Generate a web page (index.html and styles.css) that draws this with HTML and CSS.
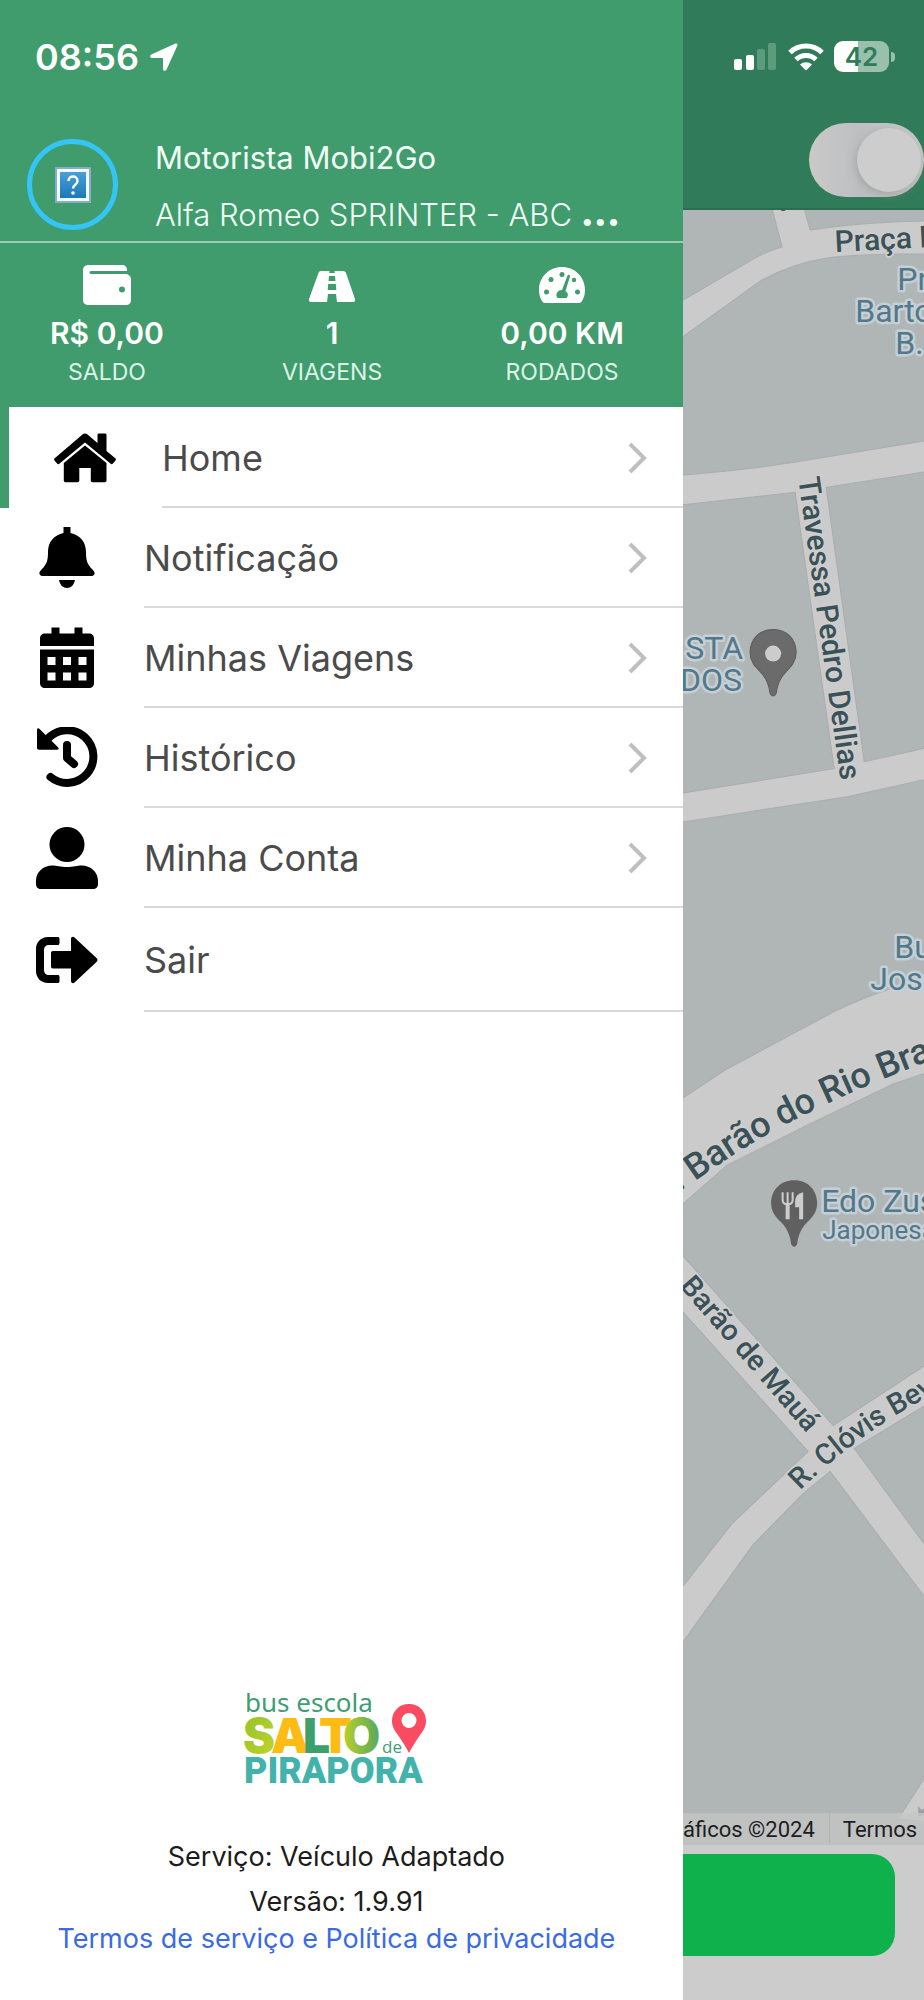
FILE: index.html
```html
<!DOCTYPE html>
<html lang="pt-BR">
<head>
<meta charset="utf-8">
<meta name="viewport" content="width=device-width, initial-scale=1">
<title>Motorista Mobi2Go</title>
<link rel="stylesheet" href="styles.css">
</head>
<body>
<div class="screen">
  <aside class="drawer">
    <header class="profile">
      <div class="clock">
        <time>08:56</time>
        <svg class="clock-arrow" viewBox="0 0 28 28" aria-hidden="true"><path d="M25.500.6 1.300 11.600c-1.700.8-1.500 3.200.4 3.400h10.500c.5 0 .8.3.8.8v10.400c.2 1.900 2.600 2.200 3.500.5L27.400 2.500c.6-1.300-.6-2.400-1.900-1.900z"/></svg>
      </div>
      <div class="driver">
        <span class="avatar">
          <svg viewBox="0 0 36 36" role="img" aria-label="Foto do motorista">
            <defs><linearGradient id="av" x2="0" y2="1"><stop stop-color="#4a9fd6"/><stop offset="1" stop-color="#1b79b8"/></linearGradient></defs>
            <rect width="36" height="36" fill="#86aecb"/><rect x="2" y="2" width="32" height="32" fill="#f4f9ff"/><rect x="5" y="5" width="26" height="26" fill="url(#av)"/>
            <path d="M13.500 14c0-6 9-6 9 0 0 4-4.500 3.500-4.500 7.500" fill="none" stroke="#fff" stroke-width="2.400"/><circle cx="18" cy="26" r="1.800" fill="#fff"/>
          </svg>
        </span>
        <div class="driver-text">
          <p>Motorista Mobi2Go</p>
          <p class="vehicle">Alfa Romeo SPRINTER - ABC <b>...</b></p>
        </div>
      </div>
    </header>
    <section class="stats">
      <div class="stat">
        <svg viewBox="0 0 48 40" width="48" height="40" aria-hidden="true"><path fill-rule="evenodd" d="M6 0h33c3 0 5 2 5 5v1H8c-2 0-2 3 0 3h34c3 0 6 2 6 5v21c0 3-2 5-5 5H6c-4 0-6-2-6-5V5c0-3 2-5 6-5zm33 21.500a3 3 0 1 0 0 6 3 3 0 0 0 0-6z"/></svg>
        <strong>R$ 0,00</strong><span>SALDO</span>
      </div>
      <div class="stat">
        <svg viewBox="0 -6 46 40" width="46" height="40" aria-hidden="true"><path fill-rule="evenodd" d="M12 0h8.500l-.3 2h5.600l-.3-2H34c1.500 0 2.500.8 3 2l9 26c.5 2-.5 3-2 3H28l-1-8h-8l-1 8H2c-1.500 0-2.500-1-2-3L9.500 2c.4-1.200 1.200-2 2.500-2zm8 5-.5 5h7L26 5zm-.8 8-.5 6h8.600l-.5-6z"/></svg>
        <strong>1</strong><span>VIAGENS</span>
      </div>
      <div class="stat">
        <svg viewBox="0 -2 46 40" width="46" height="40" aria-hidden="true"><path d="M23 0C10 0 0 10 0 23c0 4 1 8 3 11 .7 1.300 1.500 2 3 2h34c1.500 0 2.300-.7 3-2 2-3 3-7 3-11C46 10 36 0 23 0z"/><g fill="#409b6d"><circle cx="7.500" cy="25" r="2.500"/><circle cx="12" cy="12.500" r="2.500"/><circle cx="23" cy="7.500" r="2.500"/><circle cx="35" cy="13" r="2.200"/><circle cx="38.500" cy="25" r="2.500"/><path d="M28.500 8.500c.5-1.500 3-.8 2.500.8L26.500 24c3 2 3 5 1 7h-9c-2.500-3-.5-8 4.500-8z"/></g></svg>
        <strong>0,00 KM</strong><span>RODADOS</span>
      </div>
    </section>
    <nav>
      <ul class="menu">
        <li class="current"><a href="#home">
          <svg class="icon" viewBox="0 0 62 62" aria-hidden="true"><path d="M28.500 7.500c1.500-1.300 3.500-1.300 5 0L43.500 16V8c0-1 .5-1.500 1.500-1.500h6c1 0 1.500.5 1.500 1.500v16l8.500 7c1 1 1.200 1.700.5 2.600l-2.600 3c-.8.8-1.600.8-2.500 0L31 15.500 5.600 36.600c-.9.8-1.700.8-2.500 0l-2.600-3c-.7-.9-.5-1.600.5-2.600z"/><path d="M31 18.500 52.500 36v17.500c0 1-.7 1.700-1.700 1.700H38.500c-1 0-1.700-.7-1.700-1.700V41H25.300v12.500c0 1-.7 1.700-1.700 1.700H11.500c-1 0-1.700-.7-1.700-1.700V36z"/></svg>
          <span class="label">Home</span><svg class="chevron" viewBox="0 0 20 34" aria-hidden="true"><path d="m3 3 14 14L3 31"/></svg></a></li>
        <li><a href="#notificacao">
          <svg class="icon" viewBox="0 0 62 62" aria-hidden="true"><path d="M27.500 0h7v6C44 8 50 15 50 25c0 8 1 12 6 17 2 2 3 3.500 2.500 5-.5 1.500-2 2-3.500 2H7c-1.500 0-3-.5-3.500-2-.5-1.500.5-3 2.500-5 5-5 6-9 6-17C12 15 18 8 27.500 6zM23 53h16c-1 5-4 8-8 8s-7-3-8-8z"/></svg>
          <span class="label">Notificação</span><svg class="chevron" viewBox="0 0 20 34" aria-hidden="true"><path d="m3 3 14 14L3 31"/></svg></a></li>
        <li><a href="#viagens">
          <svg class="icon" viewBox="0 0 62 62" aria-hidden="true"><path fill-rule="evenodd" d="M15.500.5h8v6h15v-6h8v6H53c3 0 5 2 5 5V19H4v-7.500c0-3 2-5 5-5h6.500zM4 22.500h54V56c0 3-2 5-5 5H9c-3 0-5-2-5-5zm7.500 7.500v8h8v-8zm15.500 0v8h8v-8zm15.500 0v8h8v-8zm-31 15.500v8h8v-8zm15.500 0v8h8v-8zm15.500 0v8h8v-8z"/></svg>
          <span class="label">Minhas Viagens</span><svg class="chevron" viewBox="0 0 20 34" aria-hidden="true"><path d="m3 3 14 14L3 31"/></svg></a></li>
        <li><a href="#historico">
          <svg class="icon" viewBox="0 0 62 62" aria-hidden="true"><path d="M1 3c0-1.800 1.500-2.200 2.600-1L22 20.200c1.200 1.300.8 2.600-1 2.600H3c-1.300 0-2-.7-2-2z"/><path d="M12 11.500a26.300 26.300 0 1 1 2.500 38.500" fill="none" stroke="#000" stroke-width="8" stroke-linecap="round"/><path d="M31 18v13l7 6" fill="none" stroke="#000" stroke-width="8" stroke-linecap="round" stroke-linejoin="round"/></svg>
          <span class="label">Histórico</span><svg class="chevron" viewBox="0 0 20 34" aria-hidden="true"><path d="m3 3 14 14L3 31"/></svg></a></li>
        <li><a href="#conta">
          <svg class="icon" viewBox="0 0 62 62" aria-hidden="true"><circle cx="31" cy="17.500" r="17.500"/><path d="M16.500 38.500c4 0 8 1.500 14.500 1.500s10.500-1.500 14.500-1.500C55 38.500 62 45 62 54v3c0 3-2 5-5 5H5c-3 0-5-2-5-5v-3c0-9 7-15.500 16.500-15.500z"/></svg>
          <span class="label">Minha Conta</span><svg class="chevron" viewBox="0 0 20 34" aria-hidden="true"><path d="m3 3 14 14L3 31"/></svg></a></li>
        <li><a href="#sair">
          <svg class="icon" viewBox="0 0 62 62" aria-hidden="true"><path d="M21.500 8c1.300 0 2 .6 2 2v4c0 1.400-.7 2-2 2H13c-3 0-5 2-5 5v20c0 3 2 5 5 5h8.500c1.300 0 2 .6 2 2v4c0 1.400-.7 2-2 2H12C5 54 0 49 0 42V20C0 13 5 8 12 8z"/><path d="M17 22h18V10c0-2 2-3 3.500-1.500L60.500 29c1.300 1.200 1.300 2.800 0 4l-22 20.500C37 55 35 54 35 52V39.500H17c-1.300 0-2-.7-2-2V24c0-1.300.7-2 2-2z"/></svg>
          <span class="label">Sair</span></a></li>
      </ul>
    </nav>
    <footer class="about">
      <svg class="logo" viewBox="0 0 184 98" width="184" height="98" role="img" aria-label="bus escola Salto de Pirapora">
        <defs>
          <linearGradient id="gs" x2="1" y2="1"><stop stop-color="#8fc12c"/><stop offset="1" stop-color="#c6d529"/></linearGradient>
          <linearGradient id="go"><stop stop-color="#b9d02b"/><stop offset="1" stop-color="#56a75f"/></linearGradient>
        </defs>
        <text class="logo-bus" x="1" y="26">bus escola</text>
        <g class="logo-salto"><text x="-1" y="67" fill="url(#gs)">S</text><text x="27" y="67" fill="#fdbb13">A</text><text x="75" y="67" fill="#fdbb13">T</text><text x="59" y="67" fill="#3f9f6a">L</text><text x="99" y="67" fill="url(#go)">O</text></g>
        <text class="logo-de" x="138" y="67">de</text>
        <text class="logo-pirapora" x="0" y="97">PIRAPORA</text>
        <path fill="#fb4b61" fill-rule="evenodd" d="M165 18c10 0 17 7.500 17 17 0 6-3 10-6 14-4 6-8 12-11 18-3-6-7-12-11-18-3-4-6-8-6-14 0-9.500 7-17 17-17zm0 9a7.500 7.500 0 1 0 0 15 7.500 7.500 0 0 0 0-15z"/>
      </svg>
      <p class="service">Serviço: Veículo Adaptado</p>
      <p class="version">Versão: 1.9.91</p>
      <a href="#termos">Termos de serviço e Política de privacidade</a>
    </footer>
  </aside>

  <main class="behind">
    <header class="topbar">
      <div class="status">
        <svg class="signal" viewBox="0 0 44 28" width="44" height="28" aria-label="Sinal"><rect y="16" width="8" height="11" rx="2"/><rect x="12" y="12" width="8" height="15" rx="2"/><g fill="#5a9c7c"><rect x="23" y="6" width="8" height="21" rx="2"/><rect x="34" width="8" height="27" rx="2"/></g></svg>
        <svg class="wifi" viewBox="0 0 36 28" width="36" height="28" aria-label="Wi-Fi"><g fill="none" stroke="#fff" stroke-width="5"><path d="M2 9.500a23 23 0 0 1 32 0"/><path d="M8 16.500a14.500 14.500 0 0 1 20 0"/></g><path d="M12 21.500a9 9 0 0 1 12 0L18.700 27a1 1 0 0 1-1.400 0z"/></svg>
        <span class="battery">42</span>
      </div>
      <input class="toggle" type="checkbox" checked aria-label="Disponível">
    </header>
    <section class="map">
      <svg class="map-canvas" viewBox="0 0 242 1633" preserveAspectRatio="xMinYMin slice" role="img" aria-label="Mapa">
        <defs>
          <path id="rio" d="M-4 981C40 950 70 930 107 911S190 870 280 837"/>
          <path id="clovis" d="M117 1279Q157 1239 212 1204L280 1165"/>
        </defs>
        <g class="road">
          <path d="M-5 93 60 55Q80 42 99 37L88-5h32l7 25Q180 12 245 11v33Q180 43 144 48 110 53 77 71L-5 130z"/>
          <path d="M-5 265Q70 259 117 251L245 230v31L143 277 181 551 245 537v31L164 586-5 612V583L151 558 112 282-5 295z"/>
          <path d="M-5 890 42 859 139 807Q185 782 245 767v94L210 873 124 914 44 954-5 997z"/>
          <path d="M-5 1039 150 1214 245 1152v40L171 1237 245 1338v52L147 1260 120 1282 70 1333-5 1437v-56L49 1312 125 1240-5 1095z"/>
          <path d="M215 1607 245 1560v50z"/>
        </g>
        <path d="M235 1594v10h6v-8l-3 2z" fill="#9b9fa8"/>
        <path d="M96-2c1 4 7 4 8 0z" fill="#3b4f55"/>
        <g class="street">
          <text class="long" transform="translate(152 42) rotate(-3)">Praça B</text>
          <text class="long" transform="translate(115 268) rotate(82)">Travessa Pedro Dellias</text>
          <text class="avenue"><textPath href="#rio">. Barão do Rio Bran</textPath></text>
          <text transform="translate(-4 1075) rotate(49)">Barão de Mauá</text>
          <text><textPath href="#clovis">R. Clóvis Bev</textPath></text>
        </g>
        <g class="place">
          <text x="214" y="80">Pr</text><text x="172" y="112">Barto</text><text x="212" y="144">B.</text>
          <text x="60" y="448" text-anchor="end">STA</text><text x="59" y="480" text-anchor="end">DOS</text>
          <text x="211" y="747">Bu</text><text x="187" y="779">José</text>
          <text x="138" y="1001">Edo Zus</text><text class="kind" x="139" y="1028">Japonesa</text>
        </g>
        <path d="M90 419c14 0 23 10 23 23 0 9-5 14-10 19-6 6-9 13-10 22q-3 5-6 0c-1-9-4-16-10-22-5-5-10-10-10-19 0-13 9-23 23-23z" fill="#6b6b6b" stroke="#5b5b5b"/><circle cx="90" cy="443" r="8" fill="#ccc"/>
        <path d="M111 969c14 0 23 10 23 23 0 9-5 14-10 19-6 6-9 13-10 22q-3 5-6 0c-1-9-4-16-10-22-5-5-10-10-10-19 0-13 9-23 23-23z" fill="#606060"/>
        <g fill="none" stroke="#ccc" stroke-width="2"><path d="M99.500 981v8q0 4 5 4t5-4v-8M104.500 981v11"/><path d="M104.500 992v16" stroke-width="4"/></g>
        <path d="M120 981v27h-4v-12h-4v-6q0-7 8-9z" fill="#ccc"/>
      </svg>
      <div class="credits"><span class="data">áficos ©2024</span><a href="#mapa">Termos</a></div>
    </section>
    <div class="action"><button type="button" aria-label="Iniciar"></button></div>
  </main>
</div>
</body>
</html>
```

FILE: styles.css
```css
* { box-sizing: border-box; }

body {
  margin: 0;
  background: #fff;
  color: #1c1c1c;
  font-family: Inter, "Liberation Sans", sans-serif;
}

p, ul { margin: 0; padding: 0; }
a { color: inherit; text-decoration: none; }
svg { display: block; flex: none; }

.screen {
  display: flex;
  min-height: 100vh;
  overflow: hidden;
}

/* Side drawer */
.drawer {
  flex: 0 0 73.9%;
  min-width: 0;
  display: flex;
  flex-direction: column;
  background: #fff;
}

.profile {
  padding: 36px 24px 8px 27px;
  border-bottom: 2px solid #9accb3;
  background: #409b6d;
  color: #fff;
}

.clock {
  display: flex;
  align-items: center;
  gap: 11px;
  height: 42px;
  padding-left: 8px;
  font-size: 36px;
  font-weight: 600;
}

.clock-arrow { width: 28px; height: 28px; fill: #fff; }

.driver {
  display: flex;
  align-items: flex-start;
  gap: 37px;
  margin-top: 51px;
}

.avatar {
  flex: none;
  display: grid;
  place-items: center;
  width: 91px;
  height: 91px;
  margin-top: 10px;
  border: 5px solid #35c5f5;
  border-radius: 50%;
}

.avatar svg { width: 36px; height: 36px; }

.driver-text {
  min-width: 0;
  height: 104px;
  color: #f1fff7;
  font-size: 31px;
  line-height: 57px;
  white-space: nowrap;
}

.vehicle { font-weight: 300; }
.vehicle b { font-size: 35px; line-height: 1; font-weight: 900; }

.stats {
  display: flex;
  justify-content: space-between;
  padding: 22px 59px 18px 50px;
  background: #409b6d;
  color: #fff;
}

.stat {
  display: flex;
  flex-direction: column;
  align-items: center;
}

.stat svg { fill: #fff; }
.stat strong { margin-top: 9px; font-size: 30px; line-height: 38px; font-weight: 600; }
.stat span { margin-top: 4px; font-size: 23px; line-height: 33px; color: #dcf3e7; }

.menu { list-style: none; }
.menu li { display: flex; }
.menu .current { border-left: 9px solid #409b6d; }

.menu a {
  position: relative;
  flex: 1;
  display: flex;
  align-items: center;
  gap: 46px;
  height: 100px;
  padding-left: 36px;
  color: #4b4b4b;
  font-size: 36px;
}

.menu .current a { height: 101px; padding-left: 45px; }
.menu li:last-child a { height: 104px; }

.icon { width: 62px; height: 62px; fill: #000; }

.label {
  flex: 1;
  align-self: stretch;
  display: flex;
  align-items: center;
  padding-top: 2px;
  border-bottom: 2px solid #d9d9d9;
}

/* Arrow lies over the end of the row */
.chevron {
  position: absolute;
  right: 36px;
  width: 20px;
  height: 34px;
  fill: none;
  stroke: #bfbfc1;
  stroke-width: 4;
}

.about {
  display: flex;
  flex-direction: column;
  align-items: center;
  margin-top: auto;
  padding: 0 12px 42px 2px;
  font-size: 27px;
}

.service { margin-top: 55px; line-height: 36px; }
.version { margin-top: 9px; line-height: 36px; }
.about a { line-height: 38px; color: #3b6be2; white-space: nowrap; }

.logo { overflow: visible; }
.logo-bus { font: 400 26px "Noto Sans", sans-serif; fill: #3f9d75; }
.logo-salto { font: 900 48px Inter, sans-serif; }
.logo-de { font: 400 17px "Open Sans", sans-serif; fill: #3f9d75; }
.logo-pirapora { font: 900 36px Roboto, sans-serif; fill: #42b3aa; }

/* Page behind the drawer */
.behind {
  flex: 1;
  min-width: 0;
  display: flex;
  flex-direction: column;
  background: #ccc;
}

.topbar {
  display: flex;
  flex-direction: column;
  height: 210px;
  padding-top: 41px;
  border-bottom: 2px solid #2a6d4f;
  background: #307c5a;
}

.status {
  display: flex;
  align-items: center;
  justify-content: flex-end;
  gap: 10px;
  height: 31px;
  padding-right: 35px;
}

.status svg { fill: #fff; }

.battery {
  position: relative;
  width: 55px;
  height: 31px;
  border-radius: 9px;
  background: linear-gradient(90deg, #fff 43%, #98c0ac 43%);
  color: #307c5a;
  font-size: 26px;
  line-height: 31px;
  font-weight: 600;
  text-align: center;
}

.battery::after {
  content: "";
  position: absolute;
  left: 57px;
  top: 11px;
  width: 4px;
  height: 10px;
  border-radius: 0 5px 5px 0;
  background: #98c0ac;
}

.toggle {
  appearance: none;
  align-self: flex-end;
  display: flex;
  justify-content: flex-end;
  width: 115px;
  height: 74px;
  margin: 51px 0 0;
  padding: 5px 3px;
  border-radius: 37px;
  background: linear-gradient(90deg, #c9c9ca, #bebfc0 45%, #c9c9ca);
}

.toggle::before {
  content: "";
  width: 64px;
  height: 64px;
  border-radius: 50%;
  background: #cdcdcd;
  box-shadow: -1px 3px 8px #8888;
}

.map {
  position: relative;
  flex: 1;
  overflow: hidden;
  background: #b0b5b6;
}

.map-canvas { width: 100%; height: 100%; }
.road { fill: #cbcbcb; stroke: #a9adaf; stroke-width: 1; }

.street {
  font: 500 29px Roboto, sans-serif;
  fill: #3a5158;
  stroke: #cdcdcd;
  stroke-width: 4;
  stroke-linejoin: round;
  paint-order: stroke;
}

.street .long { font-size: 30px; }
.street .avenue { font-size: 36px; }

.place {
  font: 400 32px Roboto, sans-serif;
  fill: #527889;
  stroke: #c5d0d6;
  stroke-width: 5;
  stroke-linejoin: round;
  paint-order: stroke;
}

.place .kind { font-size: 26px; }

/* Attribution strip drawn over the bottom of the map */
.credits {
  position: absolute;
  right: 0;
  bottom: 0;
  left: 0;
  display: flex;
  height: 32px;
  background: #c4c5c5cc;
  color: #1e1e1e;
  font: 400 22px/34px Roboto, sans-serif;
  white-space: nowrap;
}

.data {
  width: 147px;
  padding-right: 14px;
  border-right: 1px solid #b3b3b3;
  display: flex;
  justify-content: flex-end;
}

.credits a { padding-left: 13px; }

.action { padding: 9px 29px 44px 0; }

.action button {
  display: block;
  width: 100%;
  height: 102px;
  border: 0;
  border-radius: 0 23px 23px 0;
  background: #0fb14c;
}
```
